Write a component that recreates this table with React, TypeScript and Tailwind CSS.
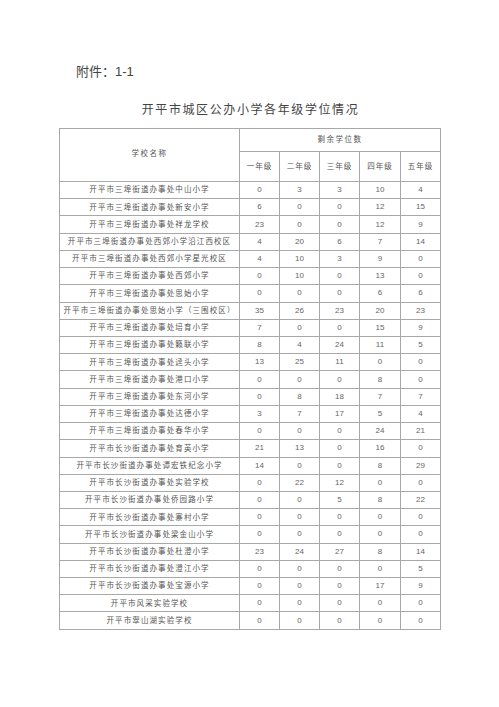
import React from "react";

const rows: [string, number[]][] = [
  ["开平市三埠街道办事处中山小学", [0, 3, 3, 10, 4]],
  ["开平市三埠街道办事处新安小学", [6, 0, 0, 12, 15]],
  ["开平市三埠街道办事处祥龙学校", [23, 0, 0, 12, 9]],
  ["开平市三埠街道办事处西郊小学沿江西校区", [4, 20, 6, 7, 14]],
  ["开平市三埠街道办事处西郊小学星光校区", [4, 10, 3, 9, 0]],
  ["开平市三埠街道办事处西郊小学", [0, 10, 0, 13, 0]],
  ["开平市三埠街道办事处思始小学", [0, 0, 0, 6, 6]],
  ["开平市三埠街道办事处思始小学（三围校区）", [35, 26, 23, 20, 23]],
  ["开平市三埠街道办事处培育小学", [7, 0, 0, 15, 9]],
  ["开平市三埠街道办事处籁联小学", [8, 4, 24, 11, 5]],
  ["开平市三埠街道办事处迳头小学", [13, 25, 11, 0, 0]],
  ["开平市三埠街道办事处港口小学", [0, 0, 0, 8, 0]],
  ["开平市三埠街道办事处东河小学", [0, 8, 18, 7, 7]],
  ["开平市三埠街道办事处达德小学", [3, 7, 17, 5, 4]],
  ["开平市三埠街道办事处春华小学", [0, 0, 0, 24, 21]],
  ["开平市长沙街道办事处育英小学", [21, 13, 0, 16, 0]],
  ["开平市长沙街道办事处谭宏铁纪念小学", [14, 0, 0, 8, 29]],
  ["开平市长沙街道办事处实验学校", [0, 22, 12, 0, 0]],
  ["开平市长沙街道办事处侨园路小学", [0, 0, 5, 8, 22]],
  ["开平市长沙街道办事处寨村小学", [0, 0, 0, 0, 0]],
  ["开平市长沙街道办事处梁金山小学", [0, 0, 0, 0, 0]],
  ["开平市长沙街道办事处杜澄小学", [23, 24, 27, 8, 14]],
  ["开平市长沙街道办事处澄江小学", [0, 0, 0, 0, 5]],
  ["开平市长沙街道办事处宝源小学", [0, 0, 0, 17, 9]],
  ["开平市风采实验学校", [0, 0, 0, 0, 0]],
  ["开平市翠山湖实验学校", [0, 0, 0, 0, 0]],
];

const grades = ["一年级", "二年级", "三年级", "四年级", "五年级"];

export default function App() {
  return (
    <div
      className="w-[499px] h-[707px] bg-white text-[#555]"
      style={{ fontFamily: '"Liberation Sans", "Noto Sans CJK SC", sans-serif' }}
    >
      <div className="pt-[63px] pl-[76px] text-[13px] leading-[18px] text-[#444]">附件：1-1</div>
      <div className="mt-[20px] text-center text-[12px] leading-[18px] tracking-[1.6px] text-[#444] pl-[2px]">
        开平市城区公办小学各年级学位情况
      </div>
      <div className="mt-[9px] ml-[59px]">
        <table className="border-collapse table-fixed w-[381px] text-center">
          <colgroup>
            <col className="w-[180px]" />
            <col className="w-[40px]" />
            <col className="w-[40px]" />
            <col className="w-[40px]" />
            <col className="w-[41px]" />
            <col className="w-[40px]" />
          </colgroup>
          <thead>
            <tr className="h-[23px]">
              <th rowSpan={2} className="border border-[#a8a8a8] font-normal text-[7.5px] tracking-[1.5px] p-0 align-middle pb-[2px]">
                学校名称
              </th>
              <th colSpan={5} className="border border-[#a8a8a8] font-normal text-[7.5px] tracking-[1.5px] p-0">
                剩余学位数
              </th>
            </tr>
            <tr className="h-[30px]">
              {grades.map((g) => (
                <th key={g} className="border border-[#a8a8a8] font-normal text-[7.5px] tracking-[1px] p-0">
                  {g}
                </th>
              ))}
            </tr>
          </thead>
          <tbody>
            {rows.map(([name, vals], i) => (
              <tr key={i} className="h-[17.23px]">
                <td className="border border-[#a8a8a8] p-0 text-[7.5px] tracking-[1.1px] whitespace-nowrap leading-none">
                  {name}
                </td>
                {vals.map((v, j) => (
                  <td key={j} className="border border-[#a8a8a8] p-0 text-[8px] leading-none text-[#666]">
                    {v}
                  </td>
                ))}
              </tr>
            ))}
          </tbody>
        </table>
      </div>
    </div>
  );
}
